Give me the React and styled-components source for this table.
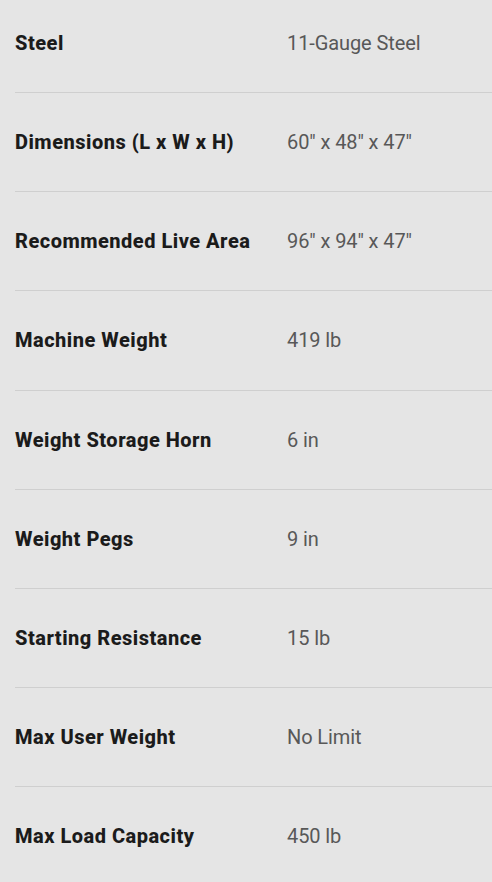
import React from 'react';
import styled, { createGlobalStyle } from 'styled-components';

const GlobalStyle = createGlobalStyle`
	body {
		margin: 0;
		background: #e5e5e5;
		font-family: 'Roboto', 'Liberation Sans', sans-serif;
	}
`;

const List = styled.div`
	margin-top: -6px;
	padding-left: 15px;
	overflow: hidden;
`;

const Row = styled.div`
	display: grid;
	grid-template-columns: 272px 1fr;
	align-items: center;
	height: 99.15px;
	box-sizing: border-box;
	border-bottom: 1px solid #cfcfcf;
`;

const Label = styled.div`
	font-size: 20px;
	font-weight: 800;
	color: #1b1b1b;
	letter-spacing: 0.5px;
`;

const Value = styled.div`
	font-size: 20px;
	font-weight: 400;
	color: #585858;
	letter-spacing: -0.1px;
`;

const specs = [
	['Steel', '11-Gauge Steel'],
	['Dimensions (L x W x H)', '60" x 48" x 47"'],
	['Recommended Live Area', '96" x 94" x 47"'],
	['Machine Weight', '419 lb'],
	['Weight Storage Horn', '6 in'],
	['Weight Pegs', '9 in'],
	['Starting Resistance', '15 lb'],
	['Max User Weight', 'No Limit'],
	['Max Load Capacity', '450 lb'],
];

const App = () => (
	<>
		<GlobalStyle />
		<List>
			{specs.map(([label, value]) => (
				<Row key={label}>
					<Label>{label}</Label>
					<Value>{value}</Value>
				</Row>
			))}
		</List>
	</>
);

export default App;
